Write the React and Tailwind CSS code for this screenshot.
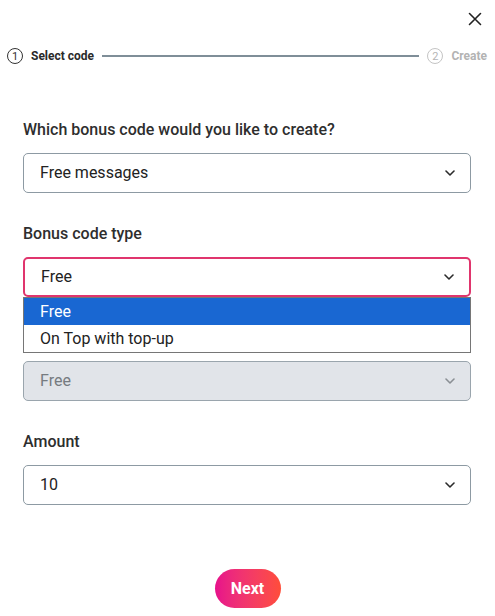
import { useState } from 'react';

const Chevron = ({ color = '#2b2b2b' }) => (
    <svg width="10" height="6" viewBox="0 0 10 6" fill="none">
        <path d="M1 1l4 4 4-4" stroke={color} strokeWidth="1.6" strokeLinecap="round" strokeLinejoin="round" />
    </svg>
);

function Field({ label, value, disabled, active, hideLabel, children }) {
    return (
        <div className="relative">
            <div className={`text-[16px] leading-[20px] font-medium text-[#2e2e2e] mb-[13px] ${hideLabel ? 'invisible' : ''}`}>{label}</div>
            <div
                className={`h-10 flex items-center justify-between pl-[16px] pr-[15px] rounded-[5px] text-[16px] ${
                    active
                        ? 'border-2 border-[#e0356d] pl-[15px] pr-[14px]'
                        : disabled
                        ? 'border border-[#9aa5ad] bg-[#e1e4e9] text-[#767b80]'
                        : 'border border-[#8d9aa3]'
                } ${disabled ? '' : 'text-[#222]'}`}
            >
                <span>{value}</span>
                <Chevron color={disabled ? '#8a8f94' : '#2b2b2b'} />
            </div>
            {children}
        </div>
    );
}

export default function App() {
    const [type] = useState('Free');

    return (
        <div className="w-full h-[616px] bg-white font-['Roboto',sans-serif] flex flex-col">
            <div className="flex justify-end pt-[12px] pr-[13px]">
                <button className="w-[14px] h-[14px]">
                    <svg width="14" height="14" viewBox="0 0 14 14">
                        <path d="M1.5 1.5l11 11M12.5 1.5l-11 11" stroke="#222" strokeWidth="1.6" strokeLinecap="round" />
                    </svg>
                </button>
            </div>

            <div className="flex items-center mt-[22px] pl-[7px] pr-[8px] h-[16px]">
                <div className="w-[16px] h-[16px] rounded-full border border-[#333] flex items-center justify-center text-[11px] text-[#333] leading-none">1</div>
                <span className="ml-[8px] text-[12px] font-bold text-[#2a2a2a]">Select code</span>
                <div className="flex-1 h-[2px] bg-[#7f8e98] mx-[8px]"></div>
                <div className="w-[16px] h-[16px] rounded-full border border-[#c4c4c4] flex items-center justify-center text-[11px] text-[#b5b5b5] leading-none">2</div>
                <span className="ml-[8px] text-[12px] font-bold text-[#b3b3b3]">Create</span>
            </div>

            <div className="flex flex-col gap-[31px] mt-[56px] pl-[23px] pr-[24px]">
                <Field label="Which bonus code would you like to create?" value="Free messages" />
                <Field label="Bonus code type" value={type} active>
                    <div className="absolute left-0 right-0 top-[73px] z-10 bg-white border border-[#767676] text-[16px] text-[#222]">
                        <div className="h-[27px] flex items-center pl-[16px] bg-[#1967d2] text-white">Free</div>
                        <div className="h-[27px] flex items-center pl-[16px]">On Top with top-up</div>
                    </div>
                </Field>
                <Field label="Bonus kind" value="Free" disabled hideLabel />
                <Field label="Amount" value="10" />
            </div>

            <div className="flex justify-center mt-[64px]">
                <button className="w-[66px] h-[39px] rounded-full bg-gradient-to-r from-[#e70f8b] to-[#ff4d38] text-white font-bold text-[16px]">
                    Next
                </button>
            </div>
        </div>
    );
}
